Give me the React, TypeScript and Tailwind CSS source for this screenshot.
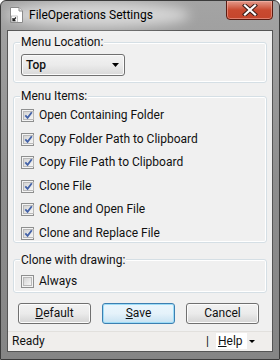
import React from "react";

const FONT = "font-['Segoe_UI',Roboto,'Liberation_Sans',sans-serif]";

function Check({ checked }: { checked: boolean }) {
  return (
    <span className="w-[13px] h-[13px] shrink-0 border border-[#8e8f8f] bg-[#f4f4f4] p-[1px] flex">
      <span className="flex-1 border border-[#b9b9b9] bg-gradient-to-br from-[#d4d4d4] to-[#f6f6f6] flex items-center justify-center">
        {checked && (
          <svg width="9" height="9" viewBox="0 0 9 9">
            <path d="M1.3 4.3 L3.6 6.9 L7.8 1.2" fill="none" stroke="#4463a8" strokeWidth="1.8" />
          </svg>
        )}
      </span>
    </span>
  );
}

function Row({ label, checked }: { label: string; checked: boolean }) {
  return (
    <div className="h-[17px] flex items-center gap-[5px]">
      <Check checked={checked} />
      <span className="leading-[15px]">{label}</span>
    </div>
  );
}

function Btn({ children, def }: { children: React.ReactNode; def?: boolean }) {
  return (
    <div
      className={
        "w-[73px] h-[21px] rounded-[3px] border flex items-center justify-center " +
        (def
          ? "border-[#3c7fb1] bg-gradient-to-b from-[#eaf6fd] via-[#e5f2fa] to-[#c7e2f2] shadow-[inset_0_0_0_1px_#9ddcf7]"
          : "border-[#707070] bg-gradient-to-b from-[#f2f2f2] via-[#ebebeb] to-[#d4d4d4] shadow-[inset_0_0_0_1px_#fcfcfc]")
      }
    >
      {children}
    </div>
  );
}

export default function App() {
  const items = [
    "Open Containing Folder",
    "Copy Folder Path to Clipboard",
    "Copy File Path to Clipboard",
    "Clone File",
    "Clone and Open File",
    "Clone and Replace File",
  ];
  return (
    <div className={"w-[280px] h-[360px] " + FONT + " text-[12px] text-[#111]"}>
      <div className="w-[280px] h-[360px] flex flex-col rounded-t-[6px] border border-[#3b3b3b] bg-gradient-to-b from-[#a4a4a4] via-[#8e8e8e] to-[#858585] overflow-hidden">
        {/* title bar */}
        <div className="h-[29px] relative flex items-start">
          <div className="absolute left-[4px] top-[1px] w-[185px] h-[26px] rounded-[50%] bg-white/55 blur-[6px]" />
          <div className="relative flex items-center pl-[9px] pt-[6px] gap-[6px]">
            <svg width="13" height="16" viewBox="0 0 13 16">
              <path d="M0.5 0.5 H9 L12.5 4 V15.5 H0.5 Z" fill="#ffffff" stroke="#8a8a8a" />
              <path d="M9 0.5 V4 H12.5" fill="#e6e6e6" stroke="#8a8a8a" />
              <rect x="1.5" y="9" width="6" height="6" fill="#ffffff" stroke="#9a9a9a" strokeWidth="0.6" />
              <path d="M6 10.5 L3 13.5 M3 11 V13.5 H5.5" fill="none" stroke="#222" strokeWidth="1.3" />
            </svg>
            <span className="text-[12px] leading-[16px] text-black">FileOperations Settings</span>
          </div>
          <div className="absolute right-[6px] top-[-1px] w-[47px] h-[20px] rounded-b-[4px] border border-[#5a1c12] bg-gradient-to-b from-[#e39a8b] via-[#c94a30] to-[#c4452c] shadow-[inset_0_0_0_1px_rgba(255,200,190,0.45)] flex items-center justify-center">
            <svg width="16" height="12" viewBox="0 0 16 12">
              <path d="M3 1.5 L13 10.5 M13 1.5 L3 10.5" stroke="#3d1f1a" strokeWidth="4.2" strokeLinecap="square" />
              <path d="M3 1.5 L13 10.5 M13 1.5 L3 10.5" stroke="#ffffff" strokeWidth="2.2" strokeLinecap="square" />
            </svg>
          </div>
        </div>
        {/* client */}
        <div className="mx-[6px] h-[322px] border border-[#555] bg-[#f0f0f0] flex flex-col">
          <div className="pl-[5px] pt-[4px] flex flex-col">
            <fieldset className="w-[254px] border border-[#d5dfe5] rounded-[3px] pl-[6px] pb-[6px] shadow-[inset_0_0_0_1px_#ffffff]">
              <legend className="px-[1px] leading-[14px] bg-[#f0f0f0]">Menu Location:</legend>
              <div className="pt-[5px] pl-[1px]">
                <div className="w-[104px] h-[22px] rounded-[3px] border border-[#707070] bg-gradient-to-b from-[#f2f2f2] via-[#ebebeb] to-[#d8d8d8] shadow-[inset_0_0_0_1px_#fbfbfb] flex items-center justify-between pl-[4px] pr-[5px]">
                  <span className="font-medium">Top</span>
                  <svg width="7" height="4" viewBox="0 0 7 4"><path d="M0 0 H7 L3.5 4 Z" fill="#000" /></svg>
                </div>
              </div>
            </fieldset>
            <fieldset className="mt-[6px] w-[254px] border border-[#d5dfe5] rounded-[3px] pl-[6px] shadow-[inset_0_0_0_1px_#ffffff]">
              <legend className="px-[1px] leading-[14px] bg-[#f0f0f0]">Menu Items:</legend>
              <div className="pt-[4px] pl-[1px] flex flex-col gap-[6.5px]">
                {items.map((t) => (
                  <Row key={t} label={t} checked />
                ))}
              </div>
            </fieldset>
            <fieldset className="mt-[10px] w-[254px] border border-[#d5dfe5] rounded-[3px] pl-[6px] pb-[2px] shadow-[inset_0_0_0_1px_#ffffff]">
              <legend className="px-[1px] leading-[14px] bg-[#f0f0f0]">Clone with drawing:</legend>
              <div className="pt-[6px] pl-[1px]">
                <Row label="Always" checked={false} />
              </div>
            </fieldset>
          </div>
          <div className="mt-[10px] pl-[10px] flex gap-[11px]">
            <Btn><span><span className="underline">D</span>efault</span></Btn>
            <Btn def><span><span className="underline">S</span>ave</span></Btn>
            <Btn>Cancel</Btn>
          </div>
          <div className="mt-[7px] flex-1 bg-[#f0eeec] border-t border-[#e2e0dd] flex items-center pl-[4px]">
            <span className="flex-1">Ready</span>
            <span className="mr-[7px]">|</span>
            <span className="bg-white h-[16px] leading-[16px] px-[2px] w-[31px]">
              <span className="underline">H</span>elp
            </span>
            <svg className="ml-[2px] mr-[17px]" width="6" height="3" viewBox="0 0 6 3"><path d="M0 0 H6 L3 3 Z" fill="#000" /></svg>
          </div>
        </div>
      </div>
    </div>
  );
}
